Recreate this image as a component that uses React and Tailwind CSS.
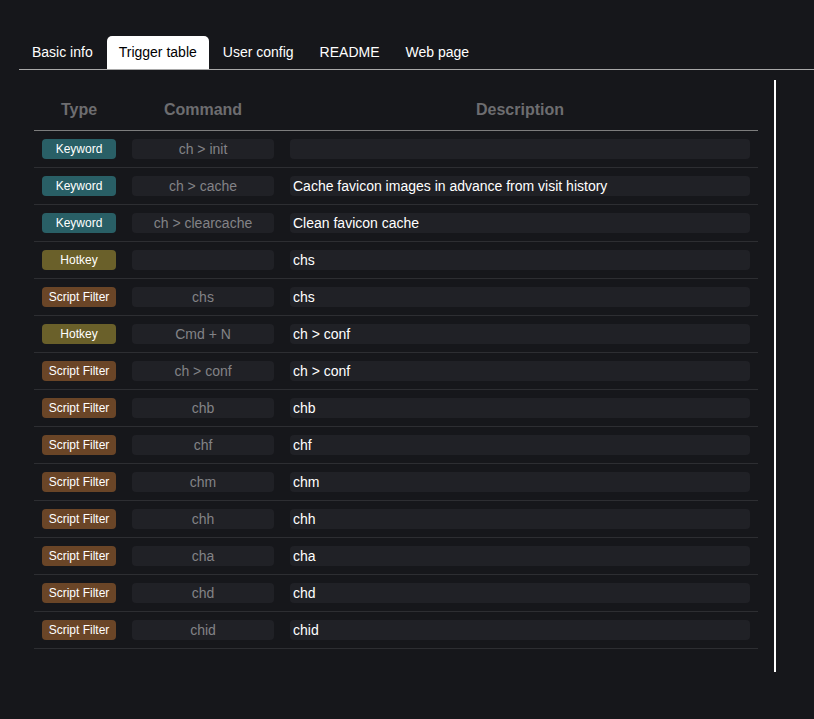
import React from "react";

const rows = [
  ["Keyword", "ch > init", ""],
  ["Keyword", "ch > cache", "Cache favicon images in advance from visit history"],
  ["Keyword", "ch > clearcache", "Clean favicon cache"],
  ["Hotkey", "", "chs"],
  ["Script Filter", "chs", "chs"],
  ["Hotkey", "Cmd + N", "ch > conf"],
  ["Script Filter", "ch > conf", "ch > conf"],
  ["Script Filter", "chb", "chb"],
  ["Script Filter", "chf", "chf"],
  ["Script Filter", "chm", "chm"],
  ["Script Filter", "chh", "chh"],
  ["Script Filter", "cha", "cha"],
  ["Script Filter", "chd", "chd"],
  ["Script Filter", "chid", "chid"],
];

const badgeClass = {
  Keyword: "bg-[#295f66]",
  Hotkey: "bg-[#6a602a]",
  "Script Filter": "bg-[#6a4527]",
};

const tabs = ["Basic info", "Trigger table", "User config", "README", "Web page"];

export default function App() {
  return (
    <div
      className="min-h-screen bg-[#16171b] pl-[19px] pt-[36px]"
      style={{ fontFamily: '"Liberation Sans", Arial, sans-serif' }}
    >
      <div className="flex border-b border-[#a8a8a8]">
        {tabs.map((t) => (
          <div
            key={t}
            className={
              t === "Trigger table"
                ? "h-[33px] px-[12px] mx-px flex items-center text-[14px] bg-white text-black rounded-t-[5px]"
                : "h-[33px] px-[12px] mx-px flex items-center text-[14px] text-white"
            }
          >
            {t}
          </div>
        ))}
      </div>
      <div className="flex pl-[15px] pt-[10px]">
        <div className="w-[724px] pt-[10px]">
          <div className="grid grid-cols-[90px_158px_476px] h-[41px] border-b border-[#7d7d7d] text-[16px] font-bold text-[#6d6d70] items-center pb-px">
            <div className="text-center">Type</div>
            <div className="text-center">Command</div>
            <div className="text-center">Description</div>
          </div>
          {rows.map(([type, cmd, desc], i) => (
            <div
              key={i}
              className="grid grid-cols-[90px_158px_476px] border-b border-[#2d2e32] py-[8px]"
            >
              <div className="px-[8px]">
                <div
                  className={`${badgeClass[type]} h-[20px] rounded-[4px] flex items-center justify-center text-[12px] text-white`}
                >
                  {type}
                </div>
              </div>
              <div className="px-[8px]">
                <div className="h-[20px] rounded-[4px] bg-[#202126] flex items-center justify-center text-[14px] text-[#838387]">
                  {cmd}
                </div>
              </div>
              <div className="px-[8px]">
                <div className="h-[20px] rounded-[4px] bg-[#202126] flex items-center pl-[3px] text-[14px] text-white">
                  {desc}
                </div>
              </div>
            </div>
          ))}
        </div>
        <div className="ml-[16px] w-[2px] h-[592px] bg-white" />
      </div>
    </div>
  );
}
